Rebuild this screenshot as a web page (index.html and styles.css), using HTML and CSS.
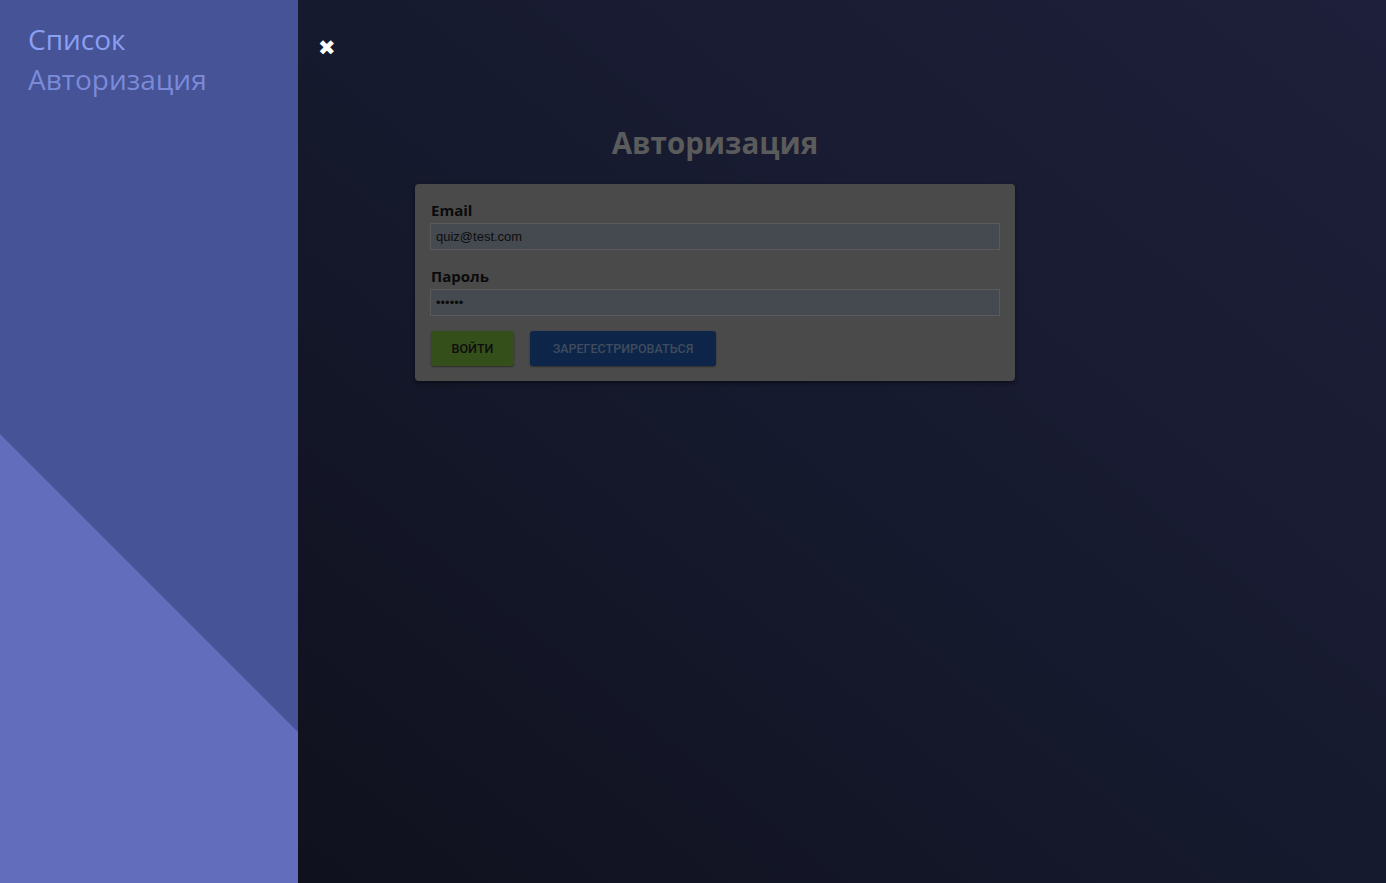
FILE: index.html
```html
<!DOCTYPE html>
<html lang="ru">
<head>
<meta charset="utf-8">
<title>Авторизация</title>
<link rel="stylesheet" href="styles.css">
</head>
<body>
<div class="app">
  <aside class="sidebar">
    <nav class="nav">
      <a class="nav-link nav-link-list" href="#">Список</a>
      <a class="nav-link nav-link-auth" href="#">Авторизация</a>
    </nav>
    <div class="sidebar-shape"></div>
  </aside>
  <main class="main">
    <button class="close" aria-label="Закрыть">✖</button>
    <div class="content">
      <h1 class="title">Авторизация</h1>
      <form class="card">
        <label class="label">Email</label>
        <input class="input" type="text" value="quiz@test.com">
        <label class="label label-second">Пароль</label>
        <input class="input" type="password" value="123456">
        <div class="actions">
          <button type="button" class="btn btn-green">Войти</button>
          <button type="button" class="btn btn-blue">Зарегестрироваться</button>
        </div>
      </form>
    </div>
  </main>
</div>
</body>
</html>
```

FILE: styles.css
```css
* { box-sizing: border-box; }
html, body { margin: 0; height: 100%; }
body {
  font-family: "Open Sans", "Noto Sans", sans-serif;
  background: #10121f;
}
.app {
  display: flex;
  height: 883px;
  overflow: hidden;
}
.sidebar {
  width: 298px;
  flex: 0 0 298px;
  background: #465397;
  position: relative;
  overflow: hidden;
}
.sidebar-shape {
  position: absolute;
  left: 0;
  top: 434px;
  width: 298px;
  height: 449px;
  background: #626dbb;
  clip-path: polygon(0 0, 100% 298px, 100% 100%, 0 100%);
}
.nav {
  position: relative;
  z-index: 1;
  display: flex;
  flex-direction: column;
  padding: 19px 0 0 28px;
}
.nav-link {
  font-size: 28px;
  line-height: 40px;
  text-decoration: none;
  font-weight: 400;
}
.nav-link-list { color: #8b9ff2; }
.nav-link-auth { color: #7b8ad9; }
.main {
  flex: 1;
  position: relative;
  background: linear-gradient(to top right, #10111e 0%, #161a2e 50%, #1e1f3a 100%);
}
.close {
  position: absolute;
  left: 20px;
  top: 36px;
  background: none;
  border: 0;
  padding: 0;
  color: #ffffff;
  font-size: 21px;
  line-height: 24px;
  font-family: "DejaVu Sans", sans-serif;
  cursor: pointer;
}
.content {
  width: 600px;
  margin-left: 117px;
  display: flex;
  flex-direction: column;
  align-items: center;
  padding-top: 122px;
}
.title {
  margin: 0 0 20px;
  font-size: 29.5px;
  line-height: 42px;
  font-weight: 700;
  color: #5b5b5b;
  text-align: center;
}
.card {
  width: 600px;
  background: #4a4a4a;
  border-radius: 4px;
  box-shadow: 0 2px 4px rgba(0, 0, 0, 0.5);
  padding: 16px 15px 15px 15px;
  display: flex;
  flex-direction: column;
}
.label {
  font-size: 15px;
  font-weight: 700;
  line-height: 20px;
  color: #0b0b0b;
  margin-bottom: 3px;
  padding-left: 1px;
}
.label-second { margin-top: 16px; }
.input {
  width: 570px;
  height: 27px;
  background: #454950;
  border: 1px solid #5a5a5a;
  color: #0d0d0d;
  font-family: "Liberation Sans", Arial, sans-serif;
  font-size: 13px;
  padding: 0 5px;
  outline: none;
}
.actions {
  display: flex;
  gap: 16px;
  margin-top: 15px;
  padding-left: 1px;
}
.btn {
  height: 35px;
  border: 0;
  border-radius: 3px;
  font-family: Roboto, "Liberation Sans", sans-serif;
  font-weight: 500;
  font-size: 12.5px;
  text-transform: uppercase;
  padding: 0;
  box-shadow: 0 1px 2px rgba(0, 0, 0, 0.4);
}
.btn-green {
  width: 83px;
  background: #354f1b;
  color: #0d0d0d;
}
.btn-blue {
  width: 186px;
  background: #0d2549;
  color: #3f4c5e;
}
```
